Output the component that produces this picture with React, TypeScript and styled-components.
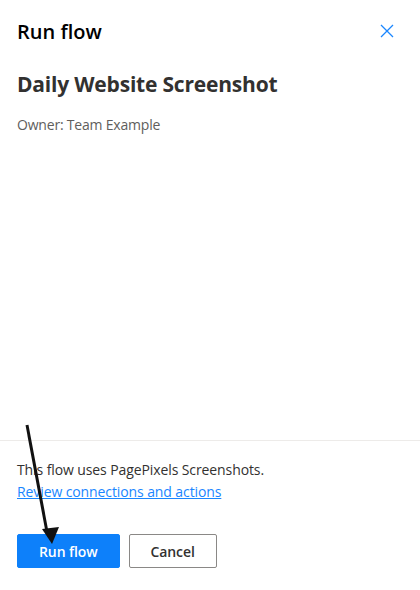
import styled, { createGlobalStyle } from 'styled-components';

const GlobalStyle = createGlobalStyle`
    html, body {
        margin: 0;
        padding: 0;
        background: #fff;
    }
    body {
        font-family: 'Open Sans', 'Noto Sans', sans-serif;
        color: #323130;
    }
`;

const Panel = styled.div`
    position: relative;
    display: flex;
    flex-direction: column;
    width: 420px;
    height: 590px;
    box-sizing: border-box;
    background: #fff;
`;

const Header = styled.div`
    display: flex;
    align-items: center;
    justify-content: space-between;
    padding: 16px 26px 0 17px;
    height: 30px;
`;

const Title = styled.h1`
    margin: 0;
    font-size: 20px;
    font-weight: 600;
    color: #000;
`;

const CloseButton = styled.button`
    display: flex;
    align-items: center;
    justify-content: center;
    padding: 0;
    border: none;
    background: none;
    color: #1a86ff;
    cursor: pointer;
`;

const Body = styled.div`
    flex: 1;
    display: flex;
    flex-direction: column;
    padding: 0 17px;
`;

const FlowName = styled.h2`
    margin: 24px 0 0;
    font-size: 21px;
    font-weight: 700;
    letter-spacing: -0.2px;
    color: #323130;
`;

const Owner = styled.p`
    margin: 17px 0 0;
    font-size: 14px;
    line-height: 19px;
    letter-spacing: -0.2px;
    color: #605e5c;
`;

const Footer = styled.div`
    display: flex;
    flex-direction: column;
    border-top: 1px solid #edebe9;
    padding: 18px 17px 22px;
`;

const Note = styled.p`
    margin: 0;
    font-size: 14px;
    line-height: 21px;
    letter-spacing: -0.1px;
    color: #323130;
`;

const Link = styled.a`
    font-size: 14px;
    line-height: 21px;
    letter-spacing: -0.1px;
    color: #1a86ff;
    text-decoration: underline;
`;

const Actions = styled.div`
    display: flex;
    gap: 9px;
    margin-top: 32px;
`;

const Button = styled.button<{ $primary?: boolean }>`
    height: 34px;
    padding: 0 21px;
    border-radius: 2px;
    font-family: 'Open Sans', 'Noto Sans', sans-serif;
    font-size: 14px;
    font-weight: 600;
    letter-spacing: -0.1px;
    cursor: pointer;
    border: 1px solid ${p => (p.$primary ? '#0d80fa' : '#8a8886')};
    background: ${p => (p.$primary ? '#0d80fa' : '#fff')};
    color: ${p => (p.$primary ? '#fff' : '#323130')};
`;

const Annotation = styled.svg`
    position: absolute;
    left: 0;
    top: 0;
    pointer-events: none;
`;

const App = () => (
    <>
        <GlobalStyle />
        <Panel>
            <Header>
                <Title>Run flow</Title>
                <CloseButton aria-label="Close">
                    <svg width="14" height="14" viewBox="0 0 14 14">
                        <path d="M1 1 L13 13 M13 1 L1 13" stroke="currentColor" strokeWidth="1.3" />
                    </svg>
                </CloseButton>
            </Header>
            <Body>
                <FlowName>Daily Website Screenshot</FlowName>
                <Owner>Owner: Team Example</Owner>
            </Body>
            <Footer>
                <Note>This flow uses PagePixels Screenshots.</Note>
                <div>
                    <Link href="#">Review connections and actions</Link>
                </div>
                <Actions>
                    <Button $primary>Run flow</Button>
                    <Button>Cancel</Button>
                </Actions>
            </Footer>
            <Annotation width="420" height="590">
                <line x1="27" y1="425" x2="47" y2="532" stroke="#111" strokeWidth="3" />
                <polygon points="52,544 42,529 59,527" fill="#111" />
            </Annotation>
        </Panel>
    </>
);

export default App;
